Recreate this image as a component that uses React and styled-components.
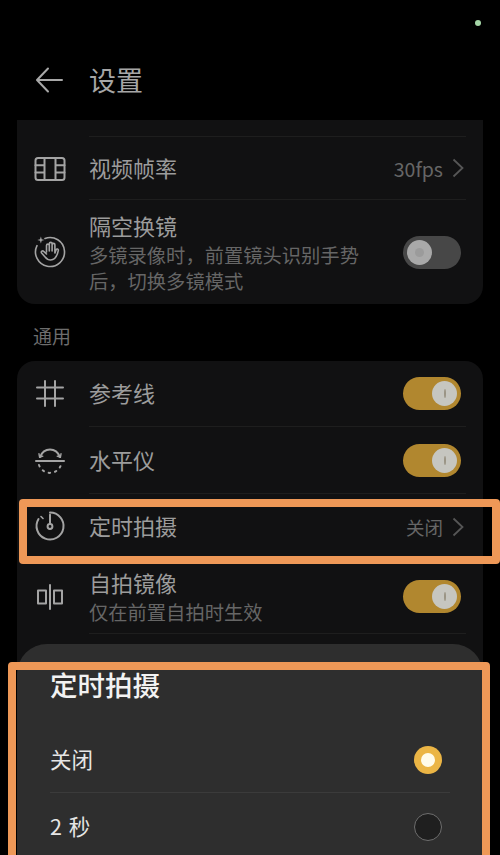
import React from "react";
import styled, { createGlobalStyle } from "styled-components";

const Global = createGlobalStyle`
  html, body {
    margin: 0;
    padding: 0;
    background: #000;
  }
  * {
    box-sizing: border-box;
  }
`;

const Screen = styled.div`
  position: relative;
  width: 500px;
  height: 855px;
  overflow: hidden;
  display: flex;
  flex-direction: column;
  background: #000;
  font-family: "Noto Sans CJK SC", "Noto Sans", sans-serif;
`;
const StatusBar = styled.div`
  height: 40px;
  padding: 20px 19px 0 0;
  display: flex;
  justify-content: flex-end;
  align-items: flex-start;
`;
const Led = styled.span`
  width: 6px;
  height: 6px;
  border-radius: 50%;
  background: #a5d6a7;
`;
const Header = styled.header`
  height: 80px;
  display: flex;
  align-items: center;
  padding-left: 34px;
  color: #a8a8a8;
`;
const BackSlot = styled.div`
  width: 55px;
  display: flex;
  align-items: center;
`;
const PageTitle = styled.h1`
  margin: 0;
  font-size: 27px;
  font-weight: 400;
  line-height: 36px;
  color: #a6a6a6;
`;
const Card = styled.section`
  margin: 0 17px;
  background: #111112;
  border-radius: ${(p) => (p.$flat ? "0 0 18px 18px" : "18px 18px 0 0")};
  flex: ${(p) => (p.$fill ? 1 : "none")};
`;
const CutOffTop = styled.div`
  height: 17px;
  margin: 0 17px 0 72px;
  border-bottom: 1px solid #1e1e1e;
`;
const SectionLabel = styled.h2`
  margin: 0;
  height: 57px;
  padding: 19px 0 0 33px;
  font-size: 19px;
  font-weight: 400;
  line-height: 26px;
  color: #6d6d6d;
`;
const Row = styled.div`
  display: flex;
  align-items: stretch;
  height: ${(p) => p.$h}px;
`;
const IconSlot = styled.div`
  width: 72px;
  padding-left: 17px;
  flex: none;
  display: flex;
  align-items: center;
  color: #a4a4a4;
`;
const RowBody = styled.div`
  flex: 1;
  display: flex;
  align-items: center;
  justify-content: space-between;
  margin-right: 17px;
  border-bottom: ${(p) => (p.$last ? "none" : "1px solid #1e1e1e")};
`;
const TextStack = styled.div`
  display: flex;
  flex-direction: column;
  width: 280px;
`;
const RowTitle = styled.div`
  font-size: 22px;
  line-height: 28px;
  margin-bottom: 3px;
  color: #9c9c9c;
`;
const RowNote = styled.div`
  font-size: 19.3px;
  line-height: 26px;
  color: #666;
`;
const Value = styled.div`
  display: flex;
  align-items: center;
  gap: 9px;
  margin-right: 2px;
  font-size: ${(p) => p.$size}px;
  color: #666;
`;
const Track = styled.div`
  width: 58px;
  height: 33px;
  margin-right: 5px;
  padding: 0 4px;
  border-radius: 17px;
  display: flex;
  align-items: center;
  justify-content: ${(p) => (p.$on ? "flex-end" : "flex-start")};
  background: ${(p) => (p.$on ? "#b1872f" : "#474747")};
`;
const Knob = styled.div`
  width: 25px;
  height: 25px;
  border-radius: 50%;
  display: flex;
  align-items: center;
  justify-content: center;
  background: ${(p) => (p.$on ? "#c6c6c0" : "#a9a9a9")};
  &::after {
    content: "";
    width: ${(p) => (p.$on ? "2px" : "9px")};
    height: 9px;
    border-radius: 50%;
    background: ${(p) => (p.$on ? "#9a9484" : "#9b9b9b")};
  }
`;
const Sheet = styled.div`
  position: absolute;
  left: 17px;
  right: 17px;
  top: 644px;
  bottom: 0;
  padding: 22px 33px 0 33px;
  background: #2e2e2e;
  border-radius: 30px 30px 0 0;
`;
const SheetTitle = styled.div`
  font-size: 27.5px;
  font-weight: 500;
  line-height: 36px;
  margin-bottom: 25px;
  color: #f2f2f2;
`;
const Option = styled.div`
  height: ${(p) => p.$h}px;
  padding-right: 8px;
  display: flex;
  align-items: center;
  justify-content: space-between;
  border-bottom: ${(p) => (p.$line ? "1px solid #3b3b3b" : "none")};
`;
const OptionLabel = styled.span`
  margin-bottom: 2px;
  font-size: 21.5px;
  word-spacing: 2px;
  color: #e6e6e6;
`;
const Radio = styled.span`
  width: 28px;
  height: 28px;
  border-radius: 50%;
  display: flex;
  align-items: center;
  justify-content: center;
  background: ${(p) => (p.$on ? "#ebb545" : "#1f1f1f")};
  border: ${(p) => (p.$on ? "none" : "1.5px solid #6e6e6e")};
  &::after {
    content: "";
    display: ${(p) => (p.$on ? "block" : "none")};
    width: 14px;
    height: 14px;
    border-radius: 50%;
    background: #fffbea;
  }
`;
const Callout = styled.div`
  position: absolute;
  left: ${(p) => p.$x}px;
  top: ${(p) => p.$y}px;
  width: ${(p) => p.$w}px;
  height: ${(p) => p.$h}px;
  border: 8px solid #ee9857;
  border-radius: 4px;
`;

const Glyph = ({ children, w = 32, h = 32, sw = 2 }) => (
  <svg
    width={w}
    height={h}
    viewBox={`0 0 ${w} ${h}`}
    fill="none"
    stroke="currentColor"
    strokeWidth={sw}
    strokeLinecap="round"
    strokeLinejoin="round"
  >
    {children}
  </svg>
);

const BackIcon = () => (
  <Glyph w={30} h={30}>
    <path d="M28 15H4M14 3.5 3 15l11 11.5" />
  </Glyph>
);
const FilmIcon = () => (
  <Glyph>
    <rect x="1.5" y="5" width="29" height="22" rx="2.5" />
    <path d="M10.5 5v22M21.5 5v22M1.5 12.3h9M1.5 19.6h9M21.5 12.3h9M21.5 19.6h9" />
  </Glyph>
);
const GestureIcon = () => (
  <Glyph sw={1.6}>
    <path d="M11 2.4A14.5 14.5 0 1 1 3 9.6" />
    <path d="M6 3.2 6.9.5l.8 2.7 2.8.8-2.8.8-.8 2.7-.9-2.7-2.7-.8z" fill="currentColor" stroke="none" />
    <path d="M12.5 16V9.5a1.4 1.4 0 0 1 2.8 0V15M15.3 15V7.8a1.4 1.4 0 0 1 2.8 0V15M18.1 15V8.8a1.4 1.4 0 0 1 2.8 0V17l1.2-3.2c.6-1.4 2.6-.8 2.2.8-.8 3.6-2.4 9.4-7.6 9.4-3 0-4.2-1.2-5.6-3L7.6 17c-1-1.4.9-2.8 2.1-1.6l2.8 2.6" />
  </Glyph>
);
const GridIcon = () => (
  <Glyph>
    <path d="M11 3v25M21 3v25M3 9.5h26M3 20.5h26" />
  </Glyph>
);
const LevelIcon = () => (
  <Glyph>
    <path d="M2 16h28" />
    <path d="M6 12C10 2 22 2 26 12" />
    <path d="M5 8.8 5.6 12.4l3.2-1.2M27 8.8l-.6 3.6-3.2-1.2" strokeWidth="1.4" />
    <path d="M5 20C9 30.5 23 30.5 27 20" strokeDasharray="1.5 5" />
  </Glyph>
);
const TimerIcon = () => (
  <Glyph>
    <path d="M16 1.5A13.5 13.5 0 1 1 4.5 8" />
    <path d="M16 3.5v9.5" />
    <circle cx="16" cy="15.5" r="2.4" />
    <path d="M7 5.5 9 7.5" strokeWidth="1.6" />
  </Glyph>
);
const MirrorIcon = () => (
  <Glyph>
    <rect x="4" y="9.5" width="8" height="13" />
    <rect x="20" y="9.5" width="8" height="13" />
    <path d="M16 4v24" />
  </Glyph>
);
const Chevron = () => (
  <svg width="12" height="20" viewBox="0 0 12 20" fill="none" stroke="#565656" strokeWidth="1.8">
    <path d="M1.5 1.5l9 8.5-9 8.5" />
  </svg>
);

const Toggle = ({ on }) => (
  <Track $on={on}>
    <Knob $on={on} />
  </Track>
);

export default function App() {
  return (
    <Screen>
      <Global />
      <StatusBar>
        <Led />
      </StatusBar>
      <Header>
        <BackSlot>
          <BackIcon />
        </BackSlot>
        <PageTitle>设置</PageTitle>
      </Header>

      <Card $flat>
        <CutOffTop />
        <Row $h={63}>
          <IconSlot>
            <FilmIcon />
          </IconSlot>
          <RowBody>
            <RowTitle>视频帧率</RowTitle>
            <Value $size={19.5}>
              30fps
              <Chevron />
            </Value>
          </RowBody>
        </Row>
        <Row $h={104}>
          <IconSlot>
            <GestureIcon />
          </IconSlot>
          <RowBody $last>
            <TextStack>
              <RowTitle>隔空换镜</RowTitle>
              <RowNote>多镜录像时，前置镜头识别手势后，切换多镜模式</RowNote>
            </TextStack>
            <Toggle />
          </RowBody>
        </Row>
      </Card>

      <SectionLabel>通用</SectionLabel>

      <Card $fill>
        <Row $h={66}>
          <IconSlot>
            <GridIcon />
          </IconSlot>
          <RowBody>
            <RowTitle>参考线</RowTitle>
            <Toggle on />
          </RowBody>
        </Row>
        <Row $h={67}>
          <IconSlot>
            <LevelIcon />
          </IconSlot>
          <RowBody>
            <RowTitle>水平仪</RowTitle>
            <Toggle on />
          </RowBody>
        </Row>
        <Row $h={66}>
          <IconSlot>
            <TimerIcon />
          </IconSlot>
          <RowBody>
            <RowTitle>定时拍摄</RowTitle>
            <Value $size={18.5}>
              关闭
              <Chevron />
            </Value>
          </RowBody>
        </Row>
        <Row $h={74}>
          <IconSlot>
            <MirrorIcon />
          </IconSlot>
          <RowBody>
            <TextStack>
              <RowTitle>自拍镜像</RowTitle>
              <RowNote>仅在前置自拍时生效</RowNote>
            </TextStack>
            <Toggle on />
          </RowBody>
        </Row>
      </Card>

      <Sheet>
        <SheetTitle>定时拍摄</SheetTitle>
        <Option $h={66} $line>
          <OptionLabel>关闭</OptionLabel>
          <Radio $on />
        </Option>
        <Option $h={67}>
          <OptionLabel>2 秒</OptionLabel>
          <Radio />
        </Option>
      </Sheet>

      <Callout $x={19} $y={499} $w={481} $h={65} />
      <Callout $x={8} $y={662} $w={482} $h={210} />
    </Screen>
  );
}
